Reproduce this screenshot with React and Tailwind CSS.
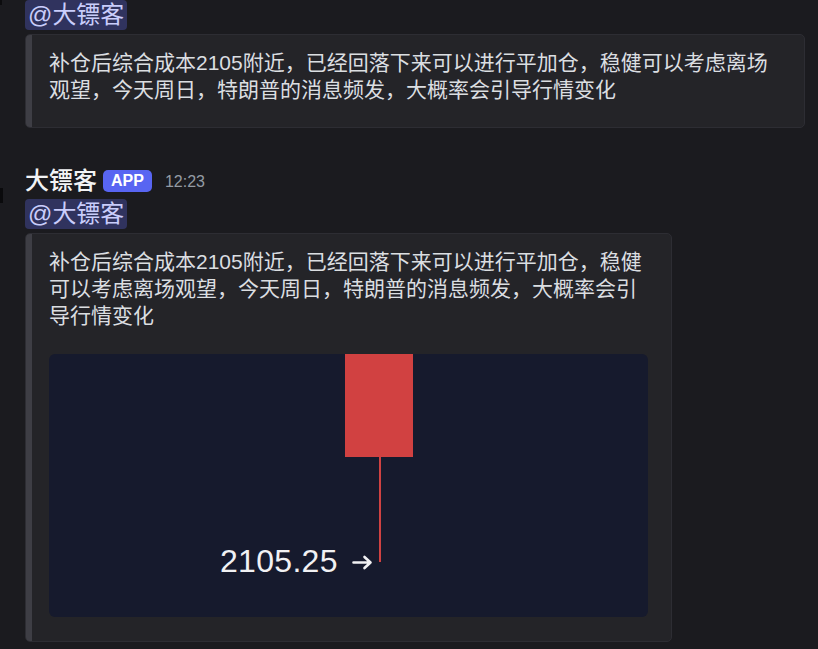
import React from 'react'

const FONT = { fontFamily: '"Liberation Sans", "Noto Sans CJK SC", sans-serif' }

const Mention = ({ name }) => (
  <div className="h-[33px] flex items-center">
    <span className="inline-block h-[30px] leading-[30px] px-[3px] rounded-[4px] bg-[#30335e] text-[#c9cdfb] text-[24px]">
      @{name}
    </span>
  </div>
)

const Embed = ({ width, children }) => (
  <div
    className={`mt-[3px] ${width} flex rounded-[5px] border border-[#2d2d33] bg-[#242428] overflow-hidden`}
  >
    <div className="w-[6px] shrink-0 bg-[#3e3e45]" />
    <div className="flex-1 pl-[17px] pr-[23px] pt-[14px] pb-[24px]">{children}</div>
  </div>
)

const text =
  '补仓后综合成本2105附近，已经回落下来可以进行平加仓，稳健可以考虑离场观望，今天周日，特朗普的消息频发，大概率会引导行情变化'

const CandleImage = () => (
  <div className="relative mt-[25px] w-[599px] h-[263px] rounded-[6px] bg-[#161a2d] overflow-hidden">
    <div className="absolute left-[296px] top-0 w-[68px] h-[103px] bg-[#d14141]" />
    <div className="absolute left-[330px] top-[103px] w-[2px] h-[105px] bg-[#cf4242]" />
    <div className="absolute left-[171px] top-[189px] flex items-center h-[36px] gap-[14px]">
      <span className="text-[32px] leading-[36px] tracking-[0.3px] text-[#f1f1f3]">2105.25</span>
      <svg width="21" height="15" viewBox="0 0 21 15" className="mt-[2px]">
        <path d="M1.5 7.5h17M12.5 2l6 5.5-6 5.5" fill="none" stroke="#f1f1f3" strokeWidth="2.6" strokeLinecap="round" strokeLinejoin="round" />
      </svg>
    </div>
  </div>
)

export default function App() {
  return (
    <div className="relative h-[649px] w-[818px] overflow-hidden bg-[#1b1b1f]" style={FONT}>
      {/* clipped avatar edges on the far left */}
      <span className="absolute left-0 top-0 w-[2px] h-[5px] bg-[#0c0c0e]" />
      <span className="absolute left-0 top-[188px] w-[3px] h-[15px] bg-[#0a0a0c]" />

      <div className="pl-[25px] -mt-[2px]">
        {/* message cut at the top */}
        <Mention name="大镖客" />
        <Embed width="w-[780px]">
          <p className="text-[21px] leading-[27px] text-[#dbdee1]">{text}</p>
        </Embed>

        {/* second message */}
        <div className="mt-[36px] h-[33px] flex items-center">
          <span className="text-[24px] font-medium text-[#f2f3f5]">大镖客</span>
          <span className="ml-[6px] h-[22px] px-[8px] rounded-[5px] bg-[#5865f2] text-white text-[16px] font-bold flex items-center">
            APP
          </span>
          <span className="ml-[13px] text-[16px] text-[#949ba4] mt-[2px]">12:23</span>
        </div>
        <Mention name="大镖客" />
        <Embed width="w-[647px]">
          <p className="text-[21px] leading-[27px] text-[#dbdee1]">{text}</p>
          <CandleImage />
        </Embed>
      </div>
    </div>
  )
}
